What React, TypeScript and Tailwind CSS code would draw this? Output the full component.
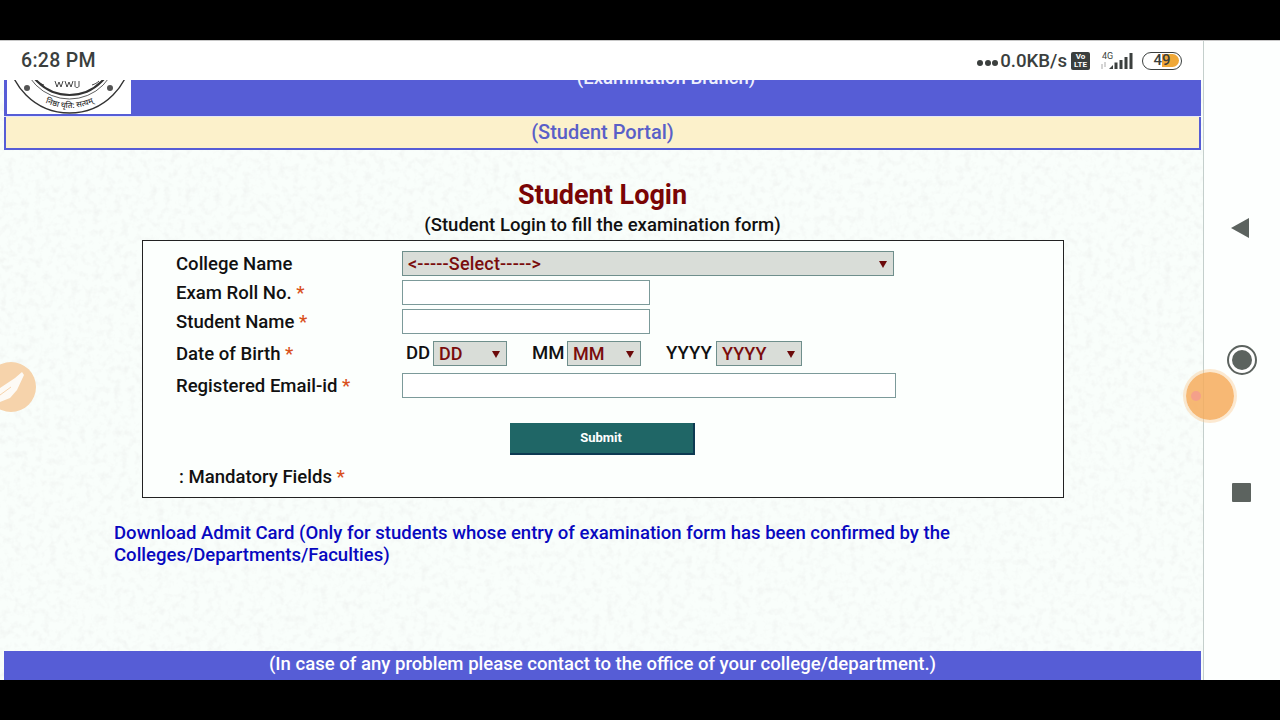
import * as React from "react";

const FONT = "font-['Roboto','Liberation_Sans',sans-serif]";

function Star() {
  return <span className="text-[#d9501c]"> *</span>;
}

function Label({ children, star }: { children: React.ReactNode; star?: boolean }) {
  return (
    <div className="w-[259px] pl-[33px] text-[18.56px] leading-[20px] font-medium text-[#111]">
      {children}
      {star ? <Star /> : null}
    </div>
  );
}

function TextBox({ wide }: { wide?: boolean }) {
  return (
    <div
      className={
        (wide ? "w-[494px]" : "w-[248px]") +
        " h-[25px] border border-[#7c9a9a] bg-white"
      }
    />
  );
}

function Select({ label, width }: { label: string; width: string }) {
  return (
    <div
      className={
        width +
        " flex h-[25px] items-center justify-between border border-[#6f8f8c] bg-[#d9ddd8] pl-[5px] pr-[6px] text-[18px] font-medium text-[#7a0c0c]"
      }
    >
      <span>{label}</span>
      <svg width="8" height="8" viewBox="0 0 8 8">
        <path d="M0 1h8L4 8z" fill="#6b0a0a" />
      </svg>
    </div>
  );
}

function Seal() {
  return (
    <svg width="124" height="34" viewBox="0 0 124 34" className="block">
      <defs>
        <path id="seal-motto" d="M13.7 0A56.5 56.5 0 0 0 111.3 0" />
      </defs>
      <g fill="none" stroke="#333">
        <circle cx="62.5" cy="-28.5" r="61.5" strokeWidth="1.4" />
        <circle cx="62.5" cy="-28.5" r="47.5" strokeWidth="0.8" />
        <circle cx="62.5" cy="-30" r="45" strokeWidth="2.2" />
        <path d="M48 1l2 6 2-5 2 5 2-6M58 1l2 6 2-5 2 5 2-6M68 1v5c0 2 4 2 4 0V1" strokeWidth="0.9" />
        <path d="M30 1c2 2 4 3 7 4M92 1c-2 2-4 3-7 4" strokeWidth="0.9" />
      </g>
      <circle cx="20" cy="8" r="3" fill="#555" />
      <circle cx="103" cy="8" r="3" fill="#555" />
      <text fontSize="8" fontWeight="500" fill="#333" fontFamily="Noto Sans, DejaVu Sans, sans-serif">
        <textPath href="#seal-motto" startOffset="50%" textAnchor="middle">
          निष्ठा धृति: सत्यम्
        </textPath>
      </text>
    </svg>
  );
}

function PaperTexture() {
  return (
    <svg className="absolute inset-0 h-full w-full">
      <filter id="paper">
        <feTurbulence type="fractalNoise" baseFrequency="0.14" numOctaves="3" seed="4" />
        <feColorMatrix values="0 0 0 0 0.88  0 0 0 0 0.91  0 0 0 0 0.89  0 0 0 2.2 -1" />
      </filter>
      <rect width="100%" height="100%" filter="url(#paper)" />
    </svg>
  );
}

function StatusBar() {
  return (
    <div className="flex h-[39px] shrink-0 items-center justify-between bg-white pl-[21px] pr-[21px]">
      <span className="text-[19.5px] font-medium tracking-[0.3px] text-[#3b3f3e]">6:28 PM</span>
      <div className="flex items-center text-[#3b3f3e]">
        <span className="mt-[4px] flex items-center gap-[1.5px]">
          <i className="h-[6px] w-[6px] rounded-full bg-[#3b3f3e]" />
          <i className="h-[6px] w-[6px] rounded-full bg-[#3b3f3e]" />
          <i className="h-[6px] w-[6px] rounded-full bg-[#3b3f3e]" />
        </span>
        <span className="ml-[2px] text-[18.67px] font-medium">0.0KB/s</span>
        <span className="ml-[4px] flex h-[18px] w-[19px] flex-col items-center justify-center rounded-[2px] bg-[#3b3f3e] text-[8px] leading-[8px] font-bold text-white">
          <span>Vo</span>
          <span>LTE</span>
        </span>
        <svg width="34" height="20" viewBox="0 0 34 20" className="ml-[10px]">
          <text x="2" y="8" fontSize="9" fill="#3b3f3e" fontFamily="Roboto, sans-serif">4G</text>
          <path d="M2 13v5M5 11v5" stroke="#aaa" strokeWidth="1" />
          <path d="M9 18l4-4v4zM14.5 11.5h3V18h-3zM19.5 9h3v9h-3zM24.5 6h3v12h-3zM29.5 2h3v16h-3z" fill="#3b3f3e" />
        </svg>
        <span className="relative ml-[8px] flex h-[18px] w-[40px] items-center overflow-hidden rounded-full border-[1.5px] border-[#3b3f3e] bg-white">
          <span className="absolute top-[1.5px] bottom-[1.5px] left-[19px] w-[17px] rounded-r-full bg-[#f0a838]" />
          <span className="relative w-full text-center text-[15px] leading-[15px] font-medium text-[#3b3f3e]">49</span>
        </span>
      </div>
    </div>
  );
}

function NavBar() {
  return (
    <div className="flex w-[77px] shrink-0 flex-col items-center border-l border-[#c4cfcc] bg-[#fdfffe] pt-[176px]">
      <svg width="20" height="22" viewBox="0 0 20 22" className="-ml-[5px]">
        <path d="M1 11 19 1v20z" fill="#5c635f" />
      </svg>
      <div className="mt-[106px] flex h-[30px] w-[30px] items-center justify-center rounded-full border-[2.5px] border-[#5c635f] bg-white">
        <div className="h-[20px] w-[20px] rounded-full bg-[#5c635f]" />
      </div>
      <div className="mt-[108px] -ml-[1px] h-[19px] w-[19px] rounded-[1px] bg-[#5c635f]" />
    </div>
  );
}

export default function App() {
  return (
    <div className={FONT + " relative flex h-[720px] w-[1280px] flex-col overflow-hidden bg-black"}>
      <div className="h-[40px] shrink-0 bg-black" />
      <div className="flex h-[640px] border-t border-[#c8c8c8] bg-white">
        <div className="flex w-[1203px] flex-col">
          <StatusBar />
          <div className="relative flex min-h-0 flex-1 flex-col bg-[#f9fefb] pr-[2px] pl-[4px]">
            <PaperTexture />
            <div className="relative flex min-h-0 flex-1 flex-col">
              {/* header strip, the page is scrolled so the title is cut */}
              <div className="flex h-[37px] shrink-0 overflow-hidden border-b border-[#e6e8f8] bg-[#565dd6]">
                <div className="ml-[3px] h-[34px] w-[124px] shrink-0 overflow-hidden bg-white">
                  <Seal />
                </div>
                <div className="-mt-[13px] h-[22px] flex-1 text-center text-[18.56px] leading-[22px] font-medium text-[#eef0fc]">
                  (Examination Branch)
                </div>
              </div>
              <div className="flex h-[33px] shrink-0 items-center justify-center border-2 border-t-0 border-[#565dd6] bg-[#fcf1cb] pb-[2px] text-[20px] font-medium text-[#5a5fc8]">
                (Student Portal)
              </div>

              <h1 className="mt-[28px] text-center text-[27px] leading-[34px] font-bold text-[#7a0505]">
                Student Login
              </h1>
              <p className="text-center text-[18.56px] leading-[26px] font-medium text-[#111]">
                (Student Login to fill the examination form)
              </p>

              <div className="mt-[2px] ml-[138px] h-[258px] w-[922px] shrink-0 border border-[#222] bg-[#fcfffd] pt-[10px]">
                <div className="flex h-[25px] items-center">
                  <Label>College Name</Label>
                  <Select label="<-----Select----->" width="w-[492px] tracking-[0.18px]" />
                </div>
                <div className="mt-[4px] flex h-[25px] items-center">
                  <Label star>Exam Roll No.</Label>
                  <TextBox />
                </div>
                <div className="mt-[4px] flex h-[25px] items-center">
                  <Label star>Student Name</Label>
                  <TextBox />
                </div>
                <div className="mt-[7px] flex h-[25px] items-center">
                  <Label star>Date of Birth</Label>
                  <div className="flex items-center text-[18.56px] font-medium text-[#111]">
                    <span className="ml-[4px] w-[27px]">DD</span>
                    <Select label="DD" width="w-[74px]" />
                    <span className="ml-[25px] w-[35px]">MM</span>
                    <Select label="MM" width="w-[74px]" />
                    <span className="ml-[25px] w-[50px]">YYYY</span>
                    <Select label="YYYY" width="w-[86px]" />
                  </div>
                </div>
                <div className="mt-[7px] flex h-[25px] items-center">
                  <Label star>Registered Email-id</Label>
                  <TextBox wide />
                </div>
                <div className="mt-[25px] flex justify-center pr-[2px]">
                  <div className="flex h-[32px] w-[185px] items-center justify-center border-r-2 border-b-2 border-[#0d3a52] bg-[#1f6666] text-[13px] font-bold text-white">
                    Submit
                  </div>
                </div>
                <div className="mt-[11px] pl-[36px] text-[18.56px] leading-[22px] font-medium text-[#111]">
                  : Mandatory Fields
                  <Star />
                </div>
              </div>

              <p className="mt-[25px] ml-[110px] w-[880px] text-[18.56px] leading-[21.5px] font-medium text-[#0808c0]">
                Download Admit Card (Only for students whose entry of examination form has been confirmed by the Colleges/Departments/Faculties)
              </p>

              <div className="mt-auto flex h-[29px] shrink-0 items-center justify-center bg-[#565dd6] pb-[1px] text-[18.56px] font-medium text-white">
                (In case of any problem please contact to the office of your college/department.)
              </div>
            </div>
          </div>
        </div>
        <NavBar />
      </div>
      <div className="h-[40px] shrink-0 bg-black" />

      {/* floating overlays from the screen recorder */}
      <div className="absolute top-[369px] left-[1183px] flex h-[54px] w-[54px] items-center justify-center rounded-full border-[3px] border-[#f9c78f]/40 bg-[#f6ab5c]/85 bg-clip-padding">
        <div className="mr-[28px] h-[10px] w-[10px] rounded-full bg-[#f4a08a]" />
      </div>
      <div className="absolute top-[362px] left-[-14px] h-[50px] w-[50px] overflow-hidden rounded-full bg-[#f6d3ab]">
        <svg width="50" height="50" viewBox="0 0 50 50">
          <path d="M36 10l2 3-7 15-7 8-10 4V26l15-10z" fill="#fdfaf5" />
          <path d="M14 33l11-8" stroke="#f6d3ab" strokeWidth="1" />
        </svg>
      </div>
    </div>
  );
}
